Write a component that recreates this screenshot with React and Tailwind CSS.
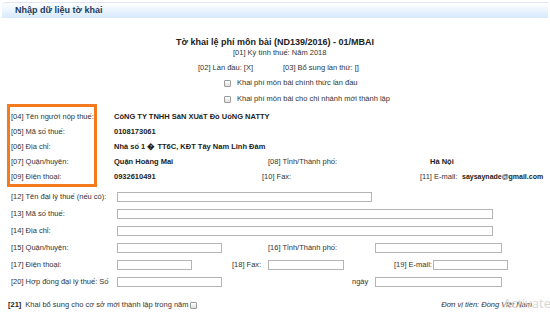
import React from 'react';

function Box() {
  return (
    <span className="inline-block w-[7px] h-[7px] border border-[#9c9c9c] rounded-[1px] bg-gradient-to-b from-white to-[#dedede] shrink-0" />
  );
}

function Field({ w }) {
  return <span className={`block h-[10px] border border-[#b4b4b4] bg-white shrink-0 ${w}`} />;
}

export default function App() {
  return (
    <div className="w-[550px] h-[323px] overflow-hidden bg-white relative text-[#333] text-[7.5px] leading-none font-['Liberation_Sans',Arial,sans-serif]">
      {/* header bar */}
      <div className="mx-[2px] mt-[2px] h-[16px] rounded-tl-[4px] border-t border-[#dfe6ef] bg-gradient-to-b from-white to-[#d5e9fc] pl-[13px] flex items-center">
        <span className="text-[9px] font-bold text-[#1d3a5c]">Nhập dữ liệu tờ khai</span>
      </div>

      {/* title block */}
      <div className="mt-[19px] h-[10px] flex items-center justify-center text-[9px] font-bold text-[#222]">
        Tờ khai lệ phí môn bài (ND139/2016) - 01/MBAI
      </div>
      <div className="mt-[1px] h-[10px] flex items-center pl-[233px]">[01] Kỳ tính thuế: Năm 2018</div>
      <div className="mt-[5px] h-[10px] flex items-center pl-[198px]">
        <span className="w-[85px]">[02] Lần đầu: [X]</span>
        <span>[03] Bổ sung lần thứ: []</span>
      </div>
      <div className="mt-[5px] h-[10px] flex items-center pl-[224px] gap-[6px]">
        <Box />
        <span>Khai phí môn bài chính thức lần đầu</span>
      </div>
      <div className="mt-[6px] h-[10px] flex items-center pl-[224px] gap-[6px]">
        <Box />
        <span>Khai phí môn bài cho chi nhánh mới thành lập</span>
      </div>

      {/* taxpayer */}
      <div className="flex items-start whitespace-nowrap">
        <div className="ml-[7px] w-[90px] border-[3px] border-[#f37a1f] pt-[2px] pl-[1px]">
          <div className="h-[15px] flex items-center">[04] Tên người nộp thuế:</div>
          <div className="h-[15px] flex items-center">[05] Mã số thuế:</div>
          <div className="h-[15px] flex items-center">[06] Địa chỉ:</div>
          <div className="h-[15px] flex items-center">[07] Quận/huyện:</div>
          <div className="h-[15px] flex items-center">[09] Điện thoại:</div>
        </div>
        <div className="ml-[17px] pt-[5px] font-bold text-[#222]">
          <div className="h-[15px] flex items-center">CôNG TY TNHH SảN XUấT Đồ UốNG NATTY</div>
          <div className="h-[15px] flex items-center">0108173061</div>
          <div className="h-[15px] flex items-center">Nhà số 1 � TT6C, KĐT Tây Nam Linh Đàm</div>
          <div className="h-[15px] flex items-center">
            <span className="w-[154px]">Quận Hoàng Mai</span>
            <span className="w-[162px] font-normal text-[#333]">[08] Tỉnh/Thành phố:</span>
            <span>Hà Nội</span>
          </div>
          <div className="h-[15px] flex items-center">
            <span className="w-[148px]">0932610491</span>
            <span className="w-[158px] font-normal text-[#333]">[10] Fax:</span>
            <span className="w-[42px] font-normal text-[#333]">[11] E-mail:</span>
            <span className="text-[7px]">saysaynade@gmail.com</span>
          </div>
        </div>
      </div>

      {/* agent */}
      <div className="mt-[1px] whitespace-nowrap">
        <div className="h-[17px] flex items-center">
          <span className="w-[117px] pl-[11px]">[12] Tên đại lý thuế (nếu có):</span>
          <Field w="w-[255px]" />
        </div>
        <div className="h-[17px] flex items-center">
          <span className="w-[117px] pl-[11px]">[13] Mã số thuế:</span>
          <Field w="w-[376px]" />
        </div>
        <div className="h-[17px] flex items-center">
          <span className="w-[117px] pl-[11px]">[14] Địa chỉ:</span>
          <Field w="w-[376px]" />
        </div>
        <div className="h-[17px] flex items-center">
          <span className="w-[117px] pl-[11px]">[15] Quận/huyện:</span>
          <Field w="w-[105px]" />
          <span className="ml-[46px] w-[107px]">[16] Tỉnh/Thành phố:</span>
          <Field w="w-[127px]" />
        </div>
        <div className="h-[17px] flex items-center">
          <span className="w-[117px] pl-[11px]">[17] Điện thoại:</span>
          <Field w="w-[75px]" />
          <span className="ml-[40px] w-[36px]">[18] Fax:</span>
          <Field w="w-[76px]" />
          <span className="ml-[50px] w-[39px]">[19] E-mail:</span>
          <Field w="w-[75px]" />
        </div>
        <div className="h-[17px] flex items-center">
          <span className="w-[117px] pl-[11px]">[20] Hợp đồng đại lý thuế: Số</span>
          <Field w="w-[105px]" />
          <span className="ml-[130px] w-[23px]">ngày</span>
          <Field w="w-[127px]" />
        </div>
      </div>

      {/* footer */}
      <div className="mt-[10px] h-[10px] flex items-center pl-[8px] pr-[18px] whitespace-nowrap">
        <span className="font-bold text-[#222] mr-[4px]">[21]</span>
        <span className="mr-[1px]">Khai bổ sung cho cơ sở mới thành lập trong năm</span>
        <Box />
        <span className="ml-auto italic">Đơn vị tiền: Đồng Việt Nam</span>
      </div>

      <span className="absolute left-[503px] top-[297px] text-[13px] text-[#d6d6d6] font-['Open_Sans',sans-serif] pointer-events-none">
        Activate
      </span>
    </div>
  );
}
